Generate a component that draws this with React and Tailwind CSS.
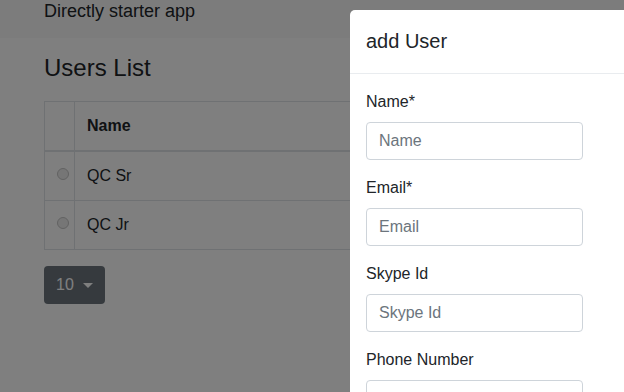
import React from "react";

function Radio() {
  return (
    <span className="block w-[12px] h-[12px] rounded-full border border-[#c4c4c4] bg-[#ececec]" />
  );
}

function Field({ label, placeholder }) {
  return (
    <div className="mb-4">
      <label className="block text-[16px] leading-6 mb-2 text-[#212529]">{label}</label>
      <div className="w-[217px] h-[38px] border border-[#ced4da] rounded-[4px] px-3 flex items-center text-[16px] text-[#6c757d]">
        {placeholder}
      </div>
    </div>
  );
}

export default function App() {
  return (
    <div className="relative w-[624px] h-[392px] overflow-hidden bg-white font-['Liberation_Sans',Arial,sans-serif] text-[#212529]">
      <div className="h-[38px] bg-[#f8f8f8] pl-[44px] pt-[2px]">
        <div className="text-[18px] leading-[18px]">Directly starter app</div>
      </div>
      <div className="pl-[44px]">
        <h2 className="text-[24px] leading-[29px] mt-[15px] mb-[19px]">Users List</h2>
        <div className="w-[560px] border border-[#dee2e6] text-[16px]">
          <div className="flex h-[50px] border-b-2 border-[#dee2e6]">
            <div className="w-[30px] border-r border-[#dee2e6]" />
            <div className="pl-3 pt-3 font-bold leading-6">Name</div>
          </div>
          <div className="flex h-[49px] border-b border-[#dee2e6]">
            <div className="w-[30px] border-r border-[#dee2e6] pt-[16px] pl-[12px]">
              <Radio />
            </div>
            <div className="pl-3 pt-3 leading-6">QC Sr</div>
          </div>
          <div className="flex h-[48px]">
            <div className="w-[30px] border-r border-[#dee2e6] pt-[16px] pl-[12px]">
              <Radio />
            </div>
            <div className="pl-3 pt-3 leading-6">QC Jr</div>
          </div>
        </div>
        <div className="mt-4 inline-flex items-center h-[38px] px-3 rounded-[4px] bg-[#6c757d] text-white text-[16px]">
          <span>10</span>
          <span className="ml-[9px] w-0 h-0 border-l-[5px] border-r-[5px] border-t-[5px] border-l-transparent border-r-transparent border-t-white" />
        </div>
      </div>

      <div className="absolute inset-0 bg-black/50" />

      <div className="absolute left-[350px] top-[10px] w-[500px] h-[420px] bg-white rounded-tl-[5px]">
        <div className="h-[64px] border-b border-[#e9ecef] px-4 pt-4">
          <div className="text-[20px] leading-[30px] text-[#212529]">add User</div>
        </div>
        <div className="p-4">
          <Field label="Name*" placeholder="Name" />
          <Field label="Email*" placeholder="Email" />
          <Field label="Skype Id" placeholder="Skype Id" />
          <Field label="Phone Number" placeholder="" />
        </div>
      </div>
    </div>
  );
}
